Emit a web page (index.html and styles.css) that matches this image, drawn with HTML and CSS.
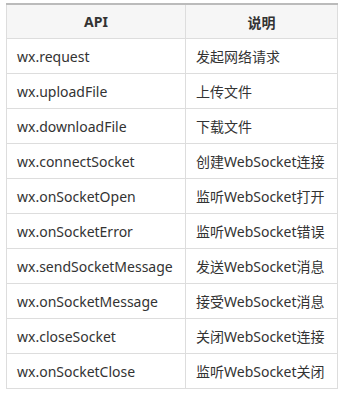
FILE: index.html
```html
<!DOCTYPE html>
<html lang="zh-CN">
<head>
  <meta charset="UTF-8">
  <title>网络 API</title>
  <link rel="stylesheet" href="styles.css">
</head>
<body>
  <table class="api-table">
    <thead>
      <tr>
        <th>API</th>
        <th>说明</th>
      </tr>
    </thead>
    <tbody>
      <tr><td>wx.request</td><td>发起网络请求</td></tr>
      <tr><td>wx.uploadFile</td><td>上传文件</td></tr>
      <tr><td>wx.downloadFile</td><td>下载文件</td></tr>
      <tr><td>wx.connectSocket</td><td>创建WebSocket连接</td></tr>
      <tr><td>wx.onSocketOpen</td><td>监听WebSocket打开</td></tr>
      <tr><td>wx.onSocketError</td><td>监听WebSocket错误</td></tr>
      <tr><td>wx.sendSocketMessage</td><td>发送WebSocket消息</td></tr>
      <tr><td>wx.onSocketMessage</td><td>接受WebSocket消息</td></tr>
      <tr><td>wx.closeSocket</td><td>关闭WebSocket连接</td></tr>
      <tr><td>wx.onSocketClose</td><td>监听WebSocket关闭</td></tr>
    </tbody>
  </table>
</body>
</html>
```

FILE: styles.css
```css
body {
  margin: 0;
  padding: 3px 6px;
  background: #fff;
  font-family: "Noto Sans", "Noto Sans CJK SC", sans-serif;
  font-size: 14px;
  color: #333;
}

.api-table {
  width: 332px;
  border-collapse: collapse;
  border-top: 2px solid #bbb;
}

.api-table th,
.api-table td {
  border: 1px solid #ddd;
  padding: 0 10px;
  text-align: left;
}

.api-table th {
  height: 33px;
  background: #f6f6f6;
  text-align: center;
  font-weight: bold;
  border-top: 2px solid #bbb;
}

.api-table td {
  height: 34px;
}

.api-table td:first-child {
  width: 158px;
}
```
